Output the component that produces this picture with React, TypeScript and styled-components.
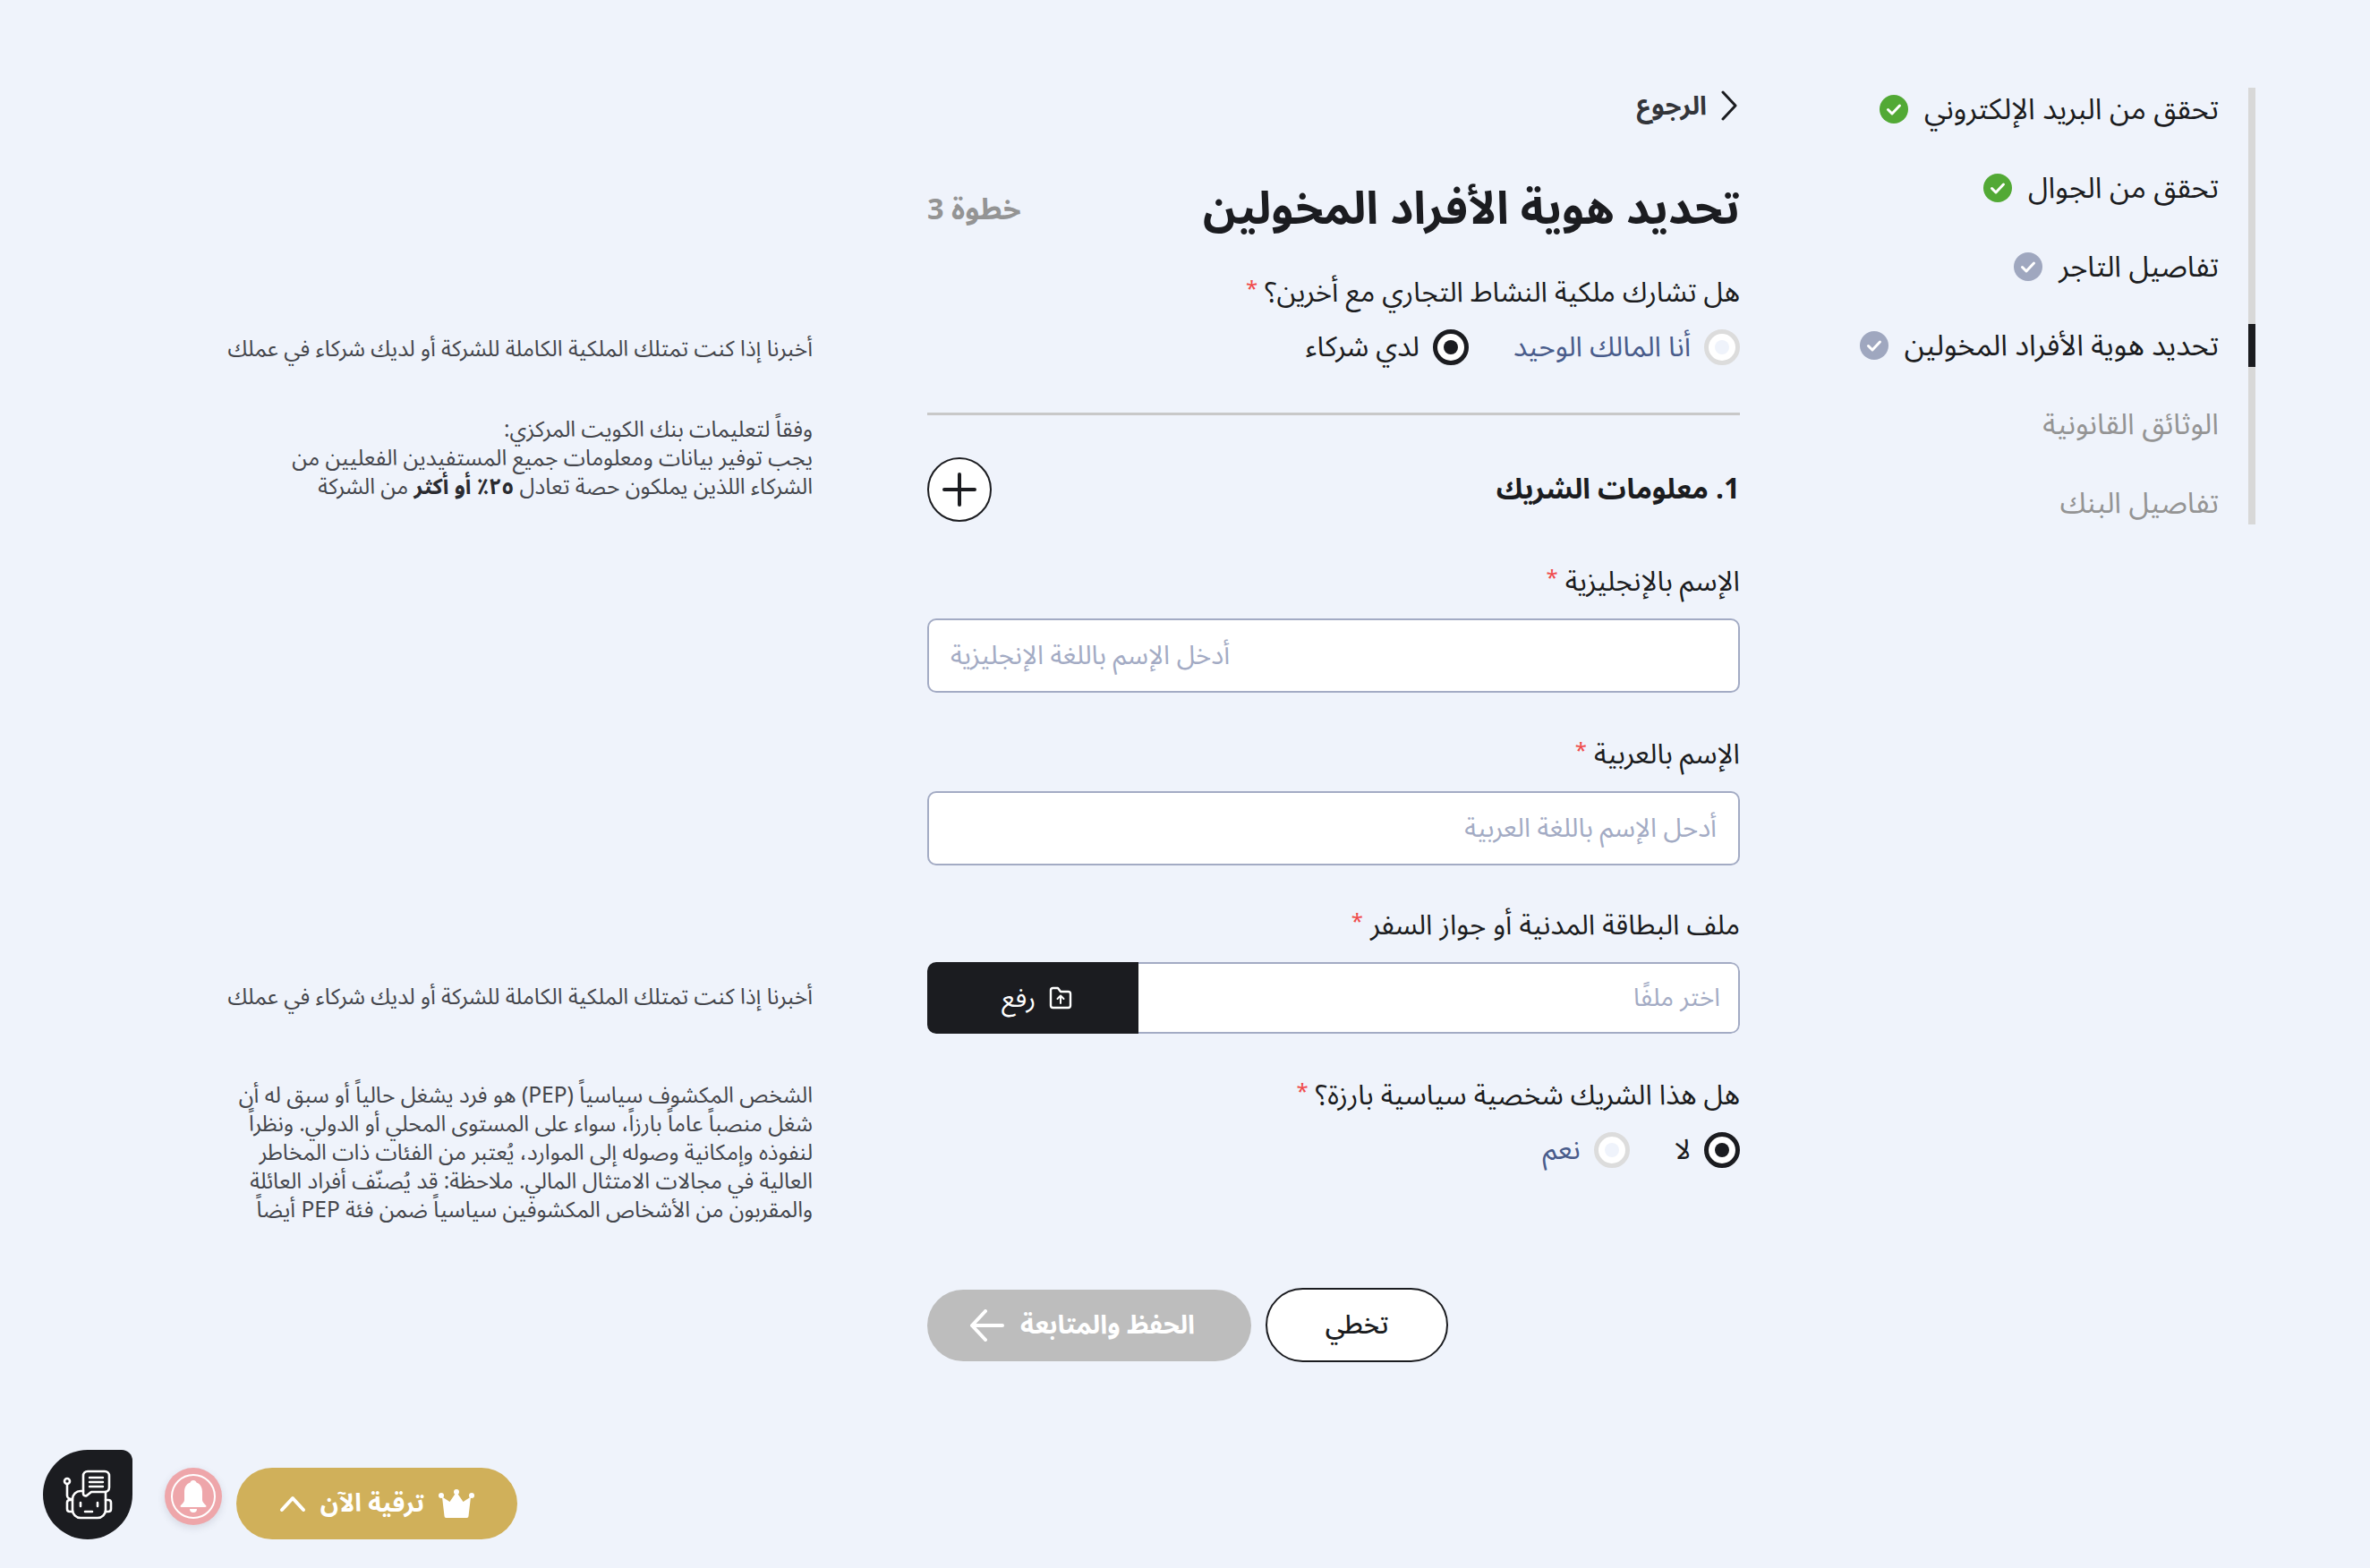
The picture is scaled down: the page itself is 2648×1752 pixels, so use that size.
import styled, { createGlobalStyle } from "styled-components"

const GlobalStyle = createGlobalStyle`
	html, body {
		margin: 0;
		padding: 0;
		background: #eff3fb;
	}
	* {
		box-sizing: border-box;
	}
	body {
		font-family: "Noto Sans Arabic", "Noto Sans", "DejaVu Sans", sans-serif;
		color: #1b1c20;
	}
`

const Page = styled.div`
	position: relative;
	width: 2648px;
	height: 1752px;
	overflow: hidden;
	display: flex;
	direction: rtl;
	padding: 98px 128px 0 0;
`

const Steps = styled.ul`
	width: 576px;
	flex: none;
	list-style: none;
	margin: 0;
	padding: 0;
	height: 488px;
	display: flex;
	flex-direction: column;
	gap: 40px;
	border-right: 8px solid #d8d8d8;
`

const Step = styled.li<{ $muted?: boolean; $active?: boolean }>`
	position: relative;
	height: 48px;
	display: flex;
	align-items: center;
	gap: 18px;
	padding-right: 33px;
	font-size: 32.5px;
	color: ${(p) => (p.$muted ? "#949494" : "#1b1c20")};

	&::after {
		content: "";
		display: ${(p) => (p.$active ? "block" : "none")};
		position: absolute;
		top: 0;
		right: -8px;
		width: 8px;
		height: 48px;
		background: #1b1c20;
	}
`

const Form = styled.main`
	width: 908px;
	flex: none;
	display: flex;
	flex-direction: column;
`

const BackRow = styled.div`
	height: 40px;
	display: flex;
	align-items: center;
	gap: 16px;
	padding-right: 3px;
	font-size: 29px;
	font-weight: 700;
	color: #33353a;
`

const TitleRow = styled.div`
	margin-top: 60px;
	height: 72px;
	display: flex;
	align-items: center;
	justify-content: space-between;
`

const Title = styled.h1`
	margin: 0;
	font-size: 50.5px;
	font-weight: 700;
	color: #1b1c20;
`

const StepCount = styled.span`
	font-size: 32.5px;
	font-weight: 700;
	color: #949494;
`

const Field = styled.div<{ $top?: number }>`
	margin-top: ${(p) => p.$top ?? 48}px;
	display: flex;
	flex-direction: column;
	gap: 22px;
`

const Label = styled.label`
	height: 40px;
	padding-top: 2px;
	display: flex;
	align-items: center;
	font-size: 31px;
	color: #1b1c20;

	&::after {
		content: "*";
		color: #f04b4b;
		font-size: 24px;
		margin-right: 8px;
		margin-bottom: 8px;
	}
`

const RadioRow = styled.div<{ $gap: number }>`
	display: flex;
	gap: ${(p) => p.$gap}px;
	height: 40px;
`

const RadioOption = styled.div<{ $on?: boolean }>`
	display: flex;
	align-items: center;
	gap: 15px;
	font-size: 31.3px;
	color: ${(p) => (p.$on ? "#1b1c20" : "#495c8b")};
`

const RadioMark = styled.span<{ $on?: boolean }>`
	width: 40px;
	height: 40px;
	flex: none;
	border-radius: 50%;
	border: 5px solid ${(p) => (p.$on ? "#1b1c20" : "#dcdcdc")};
	background: #fff;
	display: flex;
	align-items: center;
	justify-content: center;

	&::after {
		content: "";
		width: 16px;
		height: 16px;
		border-radius: 50%;
		background: ${(p) => (p.$on ? "#1b1c20" : "#eff3fb")};
	}
`

const Divider = styled.hr`
	margin: 53px 0 0;
	border: none;
	height: 3px;
	background: #c8c8c8;
`

const SectionRow = styled.div`
	margin-top: 47px;
	height: 72px;
	display: flex;
	align-items: center;
	justify-content: space-between;
`

const SectionTitle = styled.h2`
	margin: 0;
	font-size: 31.5px;
	font-weight: 700;
`

const AddButton = styled.button`
	width: 72px;
	height: 72px;
	padding: 0;
	border-radius: 50%;
	border: 2px solid #1b1c20;
	background: #fff;
	display: flex;
	align-items: center;
	justify-content: center;
`

const TextInput = styled.input<{ $hintLeft?: boolean }>`
	height: 83px;
	width: 100%;
	padding: 0 24px;
	border: 2px solid #a3abc4;
	border-radius: 10px;
	background: #fff;
	font-family: inherit;
	font-size: 29.3px;
	direction: rtl;
	text-align: ${(p) => (p.$hintLeft ? "left" : "right")};

	&::placeholder {
		color: #a3abc4;
		opacity: 1;
	}
`

const FileBox = styled.div`
	height: 80px;
	display: flex;
	border-radius: 10px;
	overflow: hidden;
`

const FileHint = styled.span`
	flex: 1;
	display: flex;
	align-items: center;
	padding: 0 20px;
	background: #fff;
	border: 2px solid #a3abc4;
	border-left: none;
	border-radius: 0 10px 10px 0;
	font-size: 28px;
	color: #a3abc4;
`

const UploadButton = styled.button`
	width: 236px;
	padding: 0 0 0 10px;
	border: none;
	background: #1b1c20;
	color: #fff;
	font-family: inherit;
	font-size: 29px;
	display: flex;
	align-items: center;
	justify-content: center;
	gap: 14px;
`

const Actions = styled.div`
	margin-top: 134px;
	display: flex;
	align-items: center;
	gap: 16px;
	justify-content: flex-end;
`

const SkipButton = styled.button`
	width: 204px;
	height: 83px;
	border: 2px solid #1b1c20;
	border-radius: 42px;
	background: #fff;
	color: #1b1c20;
	font-family: inherit;
	font-size: 29px;
	font-weight: 500;
`

const SaveButton = styled.button`
	width: 362px;
	height: 80px;
	padding: 0 16px 0 0;
	border: none;
	border-radius: 40px;
	background: #bdbdbd;
	color: #fff;
	font-family: inherit;
	font-size: 29px;
	font-weight: 700;
	display: flex;
	align-items: center;
	justify-content: center;
	gap: 17px;
`

const Help = styled.aside`
	width: 651px;
	flex: none;
	margin-right: 128px;
	display: flex;
	flex-direction: column;
	font-size: 24.5px;
	line-height: 32px;
	color: #44464c;
`

const HelpText = styled.p<{ $top: number }>`
	margin: ${(p) => p.$top}px 0 0;
	white-space: nowrap;

	b {
		font-weight: 700;
		color: #2a2b30;
	}
`

const FloatBar = styled.div`
	position: absolute;
	left: 48px;
	top: 1620px;
	display: flex;
	direction: ltr;
	align-items: flex-end;
`

const BotBubble = styled.div`
	width: 100px;
	height: 100px;
	background: #1b1c20;
	border-radius: 50% 12px 50% 50%;
	display: flex;
	align-items: center;
	justify-content: center;
`

const BellBadge = styled.div`
	width: 64px;
	height: 64px;
	margin: 0 16px 16px 36px;
	border-radius: 50%;
	background: #eea6aa;
	box-shadow: 0 3px 8px rgba(60, 60, 80, 0.15);
	display: flex;
	align-items: center;
	justify-content: center;
`

const BellRing = styled.div`
	width: 50px;
	height: 50px;
	border-radius: 50%;
	border: 2px solid #fff;
	display: flex;
	align-items: center;
	justify-content: center;
`

const UpgradeButton = styled.button`
	width: 314px;
	height: 80px;
	border: none;
	border-radius: 40px;
	background: #d0b05a;
	color: #fff;
	direction: rtl;
	font-family: inherit;
	font-size: 28px;
	font-weight: 700;
	display: flex;
	align-items: center;
	justify-content: center;
	gap: 16px;
`

const CheckBadge = ({ color }: { color: string }) => (
	<svg width="32" height="32" viewBox="0 0 32 32">
		<circle cx="16" cy="16" r="16" fill={color} />
		<path d="M9.500 16.500l4.500 4.500 8.500-9" fill="none" stroke="#fff" strokeWidth="3" strokeLinecap="round" strokeLinejoin="round" />
	</svg>
)

const BackChevron = () => (
	<svg width="18" height="34" viewBox="0 0 18 34">
		<path d="M2 2l14 15L2 32" fill="none" stroke="#1b1c20" strokeWidth="3" strokeLinecap="round" strokeLinejoin="round" />
	</svg>
)

const PlusIcon = () => (
	<svg width="38" height="38" viewBox="0 0 38 38">
		<path d="M19 2v34M2 19h34" stroke="#1b1c20" strokeWidth="4" strokeLinecap="round" />
	</svg>
)

const FolderUpload = () => (
	<svg width="28" height="28" viewBox="0 0 28 28" fill="none" stroke="#fff" strokeWidth="2.400" strokeLinecap="round" strokeLinejoin="round">
		<path d="M3 5.500C3 4 4 3 5.500 3H11l3 4h8.500C24 7 25 8 25 9.500V22.500C25 24 24 25 22.500 25H5.500C4 25 3 24 3 22.500Z" />
		<path d="M14 20v-8M10.500 15l3.500-3.500 3.500 3.500" strokeWidth="2" />
	</svg>
)

const ArrowLeft = () => (
	<svg width="40" height="36" viewBox="0 0 40 36" fill="none" stroke="#fff" strokeWidth="4" strokeLinecap="round" strokeLinejoin="round">
		<path d="M37 18H3M18 2L3 18l15 16" />
	</svg>
)

const ChevronUp = () => (
	<svg width="30" height="20" viewBox="0 0 30 20" fill="none" stroke="#fff" strokeWidth="4" strokeLinecap="round" strokeLinejoin="round">
		<path d="M3 17L15 4l12 13" />
	</svg>
)

const CrownIcon = () => (
	<svg width="40" height="32" viewBox="0 0 40 32" fill="#fff">
		<path d="M20 3l7.500 11L36 8.500 33.500 30a2 2 0 0 1-2 2h-23a2 2 0 0 1-2-2L4 8.500 12.500 14Z" />
		<circle cx="20" cy="3" r="3" />
		<circle cx="3" cy="7" r="3" />
		<circle cx="37" cy="7" r="3" />
	</svg>
)

const BellIcon = () => (
	<svg width="34" height="38" viewBox="0 0 34 38" fill="#fff">
		<path d="M17 1c2 0 3 1 3.500 2.500C25 5 27 9 27 14v9c0 2 2 4 4 6 1 1 .5 2-1 2H4c-1.500 0-2-1-1-2 2-2 4-4 4-6v-9c0-5 2-9 6.500-10.500C14 2 15 1 17 1Z" />
		<path d="M13 33h8a4 4 0 0 1-8 0Z" />
	</svg>
)

const RobotIcon = () => (
	<svg width="58" height="58" viewBox="0 0 58 58" fill="none" stroke="#fff" strokeWidth="2.600" strokeLinecap="round" strokeLinejoin="round">
		<path d="M24 25V8c0-3 2-5 5-5h19c3 0 5 2 5 5v13c0 3-2 5-5 5H33l-5 4c-2 1-4 0-4-2Z" />
		<path d="M31 10h15M31 15h15M31 20h15" strokeWidth="2.400" />
		<path d="M24 25h-3c-5 0-9 4-9 9v12c0 5 4 9 9 9h19c5 0 9-4 9-9V26" />
		<path d="M12 35H9c-2 0-3 1-3 3v7c0 2 1 3 3 3h3M49 35h3c2 0 3 1 3 3v7c0 2-1 3-3 3h-3" />
		<circle cx="6" cy="14" r="3" />
		<path d="M6 17v13c0 2 2 4 5 4" />
		<path d="M21 38v4M40 38v4M26 48h8" />
	</svg>
)

const stepItems = [
	{ text: "تحقق من البريد الإلكتروني", badge: "#52a935" },
	{ text: "تحقق من الجوال", badge: "#52a935" },
	{ text: "تفاصيل التاجر", badge: "#9fa7bf" },
	{ text: "تحديد هوية الأفراد المخولين", badge: "#9fa7bf", active: true },
	{ text: "الوثائق القانونية", muted: true },
	{ text: "تفاصيل البنك", muted: true },
]

const App = () => {
	return (
		<Page>
			<GlobalStyle />
			<Steps>
				{stepItems.map((s) => (
					<Step key={s.text} $muted={s.muted} $active={s.active}>
						{s.text}
						{s.badge && <CheckBadge color={s.badge} />}
					</Step>
				))}
			</Steps>
			<Form>
				<BackRow>
					<BackChevron />
					الرجوع
				</BackRow>
				<TitleRow>
					<Title>تحديد هوية الأفراد المخولين</Title>
					<StepCount>خطوة 3</StepCount>
				</TitleRow>
				<Field $top={36}>
					<Label>هل تشارك ملكية النشاط التجاري مع أخرين؟</Label>
					<RadioRow $gap={50}>
						<RadioOption>
							<RadioMark />
							أنا المالك الوحيد
						</RadioOption>
						<RadioOption $on>
							<RadioMark $on />
							لدي شركاء
						</RadioOption>
					</RadioRow>
				</Field>
				<Divider />
				<SectionRow>
					<SectionTitle>1. معلومات الشريك</SectionTitle>
					<AddButton>
						<PlusIcon />
					</AddButton>
				</SectionRow>
				<Field $top={46}>
					<Label>الإسم بالإنجليزية</Label>
					<TextInput $hintLeft placeholder="أدخل الإسم باللغة الإنجليزية" />
				</Field>
				<Field>
					<Label>الإسم بالعربية</Label>
					<TextInput placeholder="أدحل الإسم باللغة العربية" />
				</Field>
				<Field $top={46}>
					<Label>ملف البطاقة المدنية أو جواز السفر</Label>
					<FileBox>
						<FileHint>اختر ملفًا</FileHint>
						<UploadButton>
							<FolderUpload />
							رفع
						</UploadButton>
					</FileBox>
				</Field>
				<Field>
					<Label>هل هذا الشريك شخصية سياسية بارزة؟</Label>
					<RadioRow $gap={50}>
						<RadioOption $on>
							<RadioMark $on />
							لا
						</RadioOption>
						<RadioOption>
							<RadioMark />
							نعم
						</RadioOption>
					</RadioRow>
				</Field>
				<Actions>
					<SkipButton>تخطي</SkipButton>
					<SaveButton>
						الحفظ والمتابعة
						<ArrowLeft />
					</SaveButton>
				</Actions>
			</Form>
			<Help>
				<HelpText $top={276}>أخبرنا إذا كنت تمتلك الملكية الكاملة للشركة أو لديك شركاء في عملك</HelpText>
				<HelpText $top={58}>
					وفقاً لتعليمات بنك الكويت المركزي:
					<br />
					يجب توفير بيانات ومعلومات جميع المستفيدين الفعليين من
					<br />
					الشركاء اللذين يملكون حصة تعادل <b>٢٥٪ أو أكثر</b> من الشركة
				</HelpText>
				<HelpText $top={538}>أخبرنا إذا كنت تمتلك الملكية الكاملة للشركة أو لديك شركاء في عملك</HelpText>
				<HelpText $top={78}>
					الشخص المكشوف سياسياً (PEP) هو فرد يشغل حالياً أو سبق له أن
					<br />
					شغل منصباً عاماً بارزاً، سواء على المستوى المحلي أو الدولي. ونظراً
					<br />
					لنفوذه وإمكانية وصوله إلى الموارد، يُعتبر من الفئات ذات المخاطر
					<br />
					العالية في مجالات الامتثال المالي. ملاحظة: قد يُصنّف أفراد العائلة
					<br />
					والمقربون من الأشخاص المكشوفين سياسياً ضمن فئة PEP أيضاً
				</HelpText>
			</Help>
			<FloatBar>
				<BotBubble>
					<RobotIcon />
				</BotBubble>
				<BellBadge>
					<BellRing>
						<BellIcon />
					</BellRing>
				</BellBadge>
				<UpgradeButton>
					<CrownIcon />
					ترقية الآن
					<ChevronUp />
				</UpgradeButton>
			</FloatBar>
		</Page>
	)
}

export default App
